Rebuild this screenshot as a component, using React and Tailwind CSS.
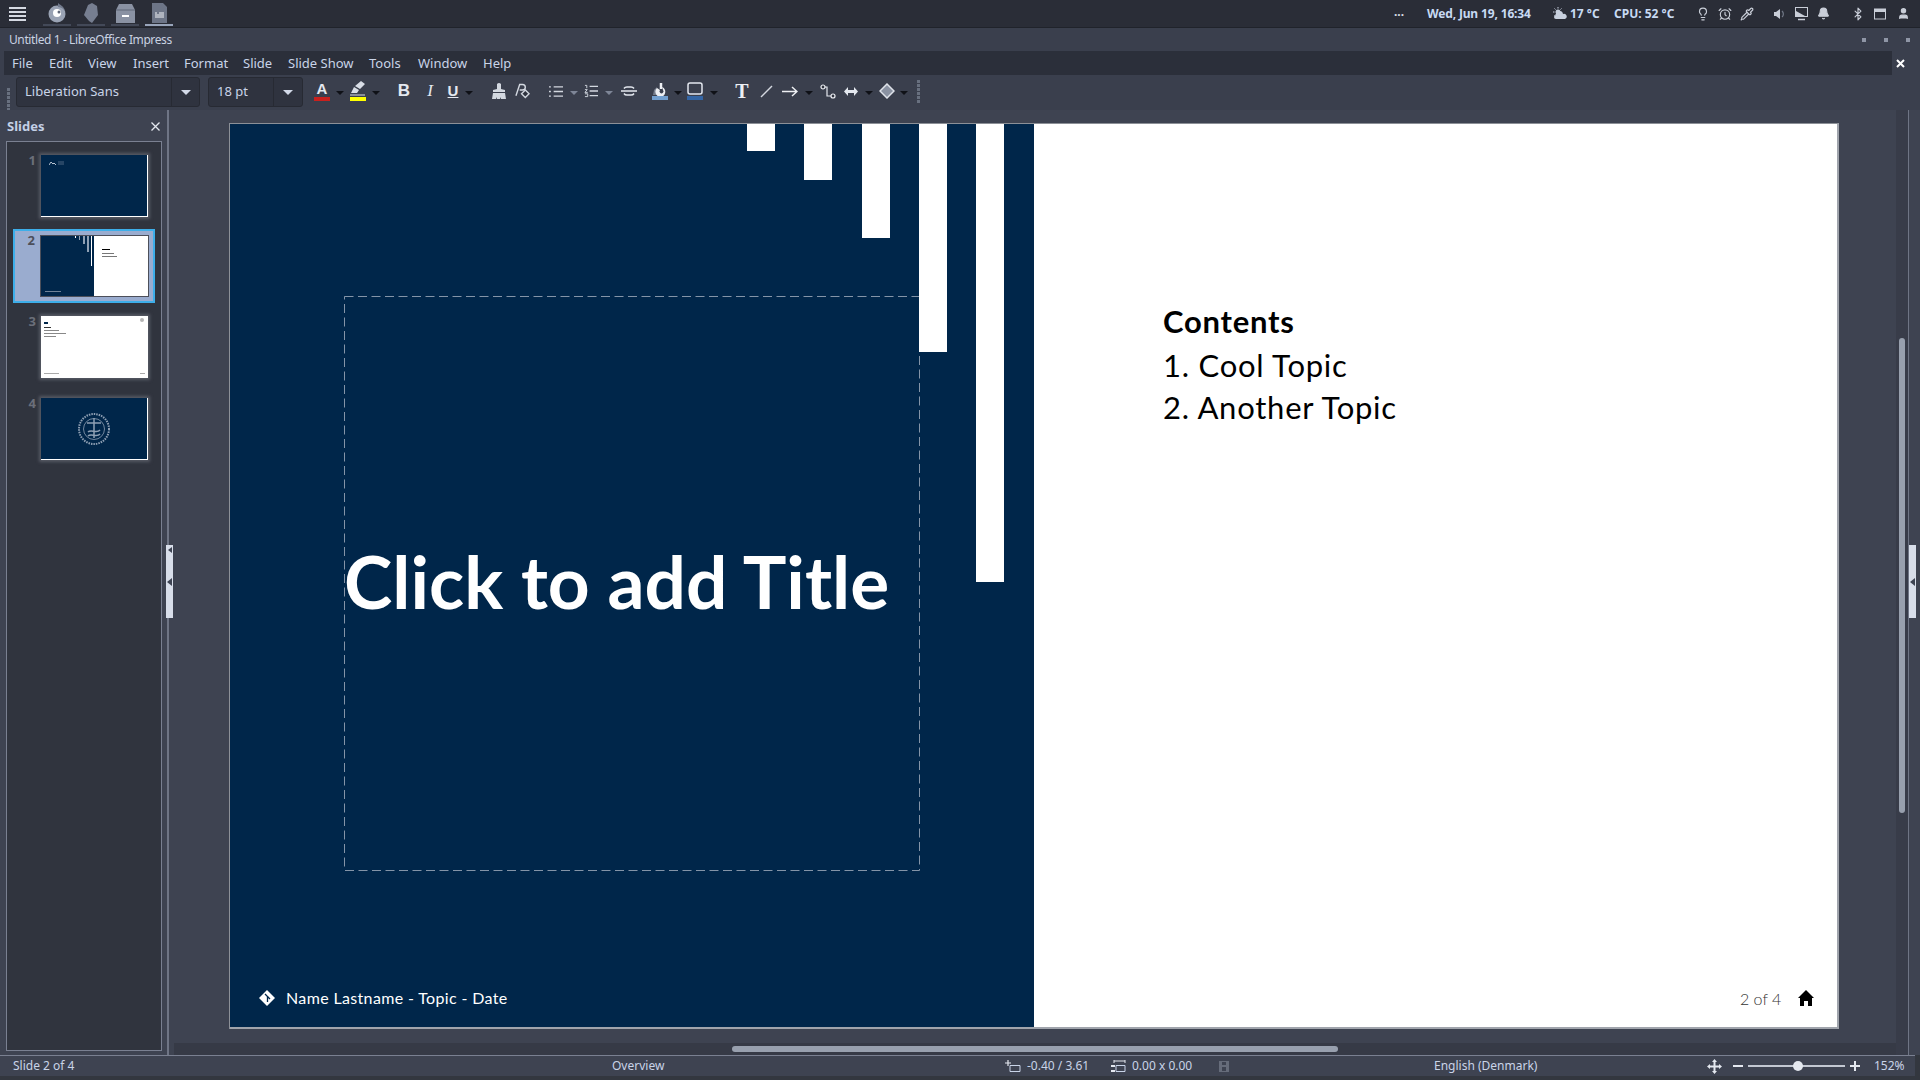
import { Bell, Bluetooth, Lightbulb, AlarmClock, Pipette, User } from 'lucide-react'

const menus = [
  ['File', 'w-[37px]'],
  ['Edit', 'w-[39px]'],
  ['View', 'w-[45px]'],
  ['Insert', 'w-[51px]'],
  ['Format', 'w-[59px]'],
  ['Slide', 'w-[45px]'],
  ['Slide Show', 'w-[81px]'],
  ['Tools', 'w-[49px]'],
  ['Window', 'w-[65px]'],
  ['Help', 'w-[40px]'],
]

function Caret({ className = 'ml-[5px]', color = 'border-t-[#0f1117]' }) {
  return <span className={`w-0 h-0 border-x-[4px] border-x-transparent border-t-[4px] shrink-0 mt-[3px] ${color} ${className}`} />
}

function Tool({ className = '', children }) {
  return <span className={`flex items-center justify-center h-[22px] shrink-0 ${className}`}>{children}</span>
}

function Combo({ width, inner, text }) {
  return (
    <div className={`flex h-[30px] rounded-[3px] border border-[#272a33] bg-[#2f333f] shrink-0 ${width}`}>
      <div className={`flex items-center pl-[8px] text-[13px] text-[#c9d4e8] ${inner}`}>{text}</div>
      <div className="flex-1 flex items-center justify-center border-l border-[#272a33]">
        <span className="w-0 h-0 border-x-[5px] border-x-transparent border-t-[5px] border-t-[#d3dae8]" />
      </div>
    </div>
  )
}

function TaskIcon({ active, children }) {
  return (
    <div className="w-[28px] h-[27px] mr-[6px] flex flex-col items-center justify-between shrink-0">
      <div className="h-[22px] mt-[2px] flex items-center justify-center">{children}</div>
      <div className={`w-[28px] h-[2px] mb-[1px] ${active ? 'bg-[#98a4ba]' : 'bg-[#434958]'}`} />
    </div>
  )
}

function TopPanel() {
  return (
    <div className="h-[28px] bg-[#2a2d37] border-b border-[#20232b] flex items-center text-[12px] font-bold text-[#c8daf3] shrink-0">
      <div className="w-[43px] pl-[9px] flex flex-col gap-[2px]">
        <div className="w-[17px] h-[2px] bg-[#d5d9e2]" />
        <div className="w-[17px] h-[2px] bg-[#d5d9e2]" />
        <div className="w-[17px] h-[2px] bg-[#d5d9e2]" />
        <div className="w-[17px] h-[2px] bg-[#d5d9e2]" />
      </div>
      <TaskIcon>
        <svg width="20" height="20" viewBox="0 0 20 20">
          <circle cx="10" cy="11" r="8.5" fill="#9aa3b4" />
          <path d="M11 0c2 2 6 3 7 8-2-3-5-4-7-4z" fill="#717a8c" />
          <circle cx="10" cy="10" r="4" fill="#fff" />
          <circle cx="12" cy="9" r="1.5" fill="#5f6778" />
        </svg>
      </TaskIcon>
      <TaskIcon>
        <svg width="14" height="20" viewBox="0 0 14 20">
          <path d="M8 0l5 3 1 9-6 8-3-2-5-6L4 2z" fill="#767e90" />
        </svg>
      </TaskIcon>
      <TaskIcon>
        <svg width="19" height="19" viewBox="0 0 19 19">
          <path d="M3 0h13l3 6v13H0V6z" fill="#8a92a3" />
          <path d="M0 6h19" stroke="#5f6676" />
          <rect x="6" y="11" width="7" height="2" fill="#fff" />
        </svg>
      </TaskIcon>
      <TaskIcon active>
        <svg width="15" height="20" viewBox="0 0 15 20">
          <path d="M0 0h11l4 4v16H0z" fill="#6d7587" />
          <path d="M3 10h2M7 10h5M3 12h9M3 14h9" stroke="#f2f4f7" strokeWidth="1" />
        </svg>
      </TaskIcon>
      <div className="flex-1" />
      <span className="w-[28px] mr-[14px] text-center text-[#d8dde6] -mt-[4px]">...</span>
      <span className="w-[126px] tracking-[-0.15px]">Wed, Jun 19, 16:34</span>
      <svg width="14" height="13" viewBox="0 0 14 13" className="mr-[1px]">
        <circle cx="5" cy="5" r="2.5" fill="#c8d0de" />
        <path d="M5 0v1.500M0 5h1.500M1.500 1.500l1 1M8.500 1.500l-1 1M1.500 8.500l1-1" stroke="#c8d0de" />
        <path d="M3 12a2 2 0 010-4 3.500 3.500 0 017-1 2.500 2.500 0 012 5z" fill="#c8d0de" />
      </svg>
      <span className="w-[44px] ml-[2px]">17 °C</span>
      <span className="w-[82px]">CPU: 52 °C</span>
      <Lightbulb size={14} strokeWidth={2} className="text-[#c9ced8] mr-[8px]" />
      <AlarmClock size={14} strokeWidth={2} className="text-[#c9ced8] mr-[8px]" />
      <Pipette size={14} strokeWidth={2} className="text-[#c9ced8] mr-[20px]" />
      <svg width="12" height="12" viewBox="0 0 12 12" className="mr-[9px]">
        <path d="M0 4h2l4-3v10L2 8H0z" fill="#c9ced8" />
        <path d="M8 3a4 4 0 010 6" stroke="#717887" fill="none" strokeWidth="1.200" />
      </svg>
      <svg width="13" height="14" viewBox="0 0 13 14" className="mr-[9px]">
        <rect x="0.500" y="0.500" width="12" height="9" fill="none" stroke="#c9ced8" />
        <path d="M1 4l9 5H1z" fill="#c9ced8" />
        <path d="M3 12.500h7" stroke="#c9ced8" strokeWidth="1.500" />
      </svg>
      <Bell size={13} fill="#c9ced8" className="text-[#c9ced8] mr-[21px]" />
      <Bluetooth size={14} strokeWidth={2} className="text-[#c9ced8] mr-[9px]" />
      <svg width="12" height="12" viewBox="0 0 12 12" className="mr-[11px]">
        <rect x="0.500" y="1" width="11" height="10" fill="none" stroke="#c9ced8" />
        <rect x="1" y="1" width="10" height="3" fill="#c9ced8" />
      </svg>
      <User size={13} fill="#c9ced8" className="text-[#c9ced8] mr-[10px]" />
    </div>
  )
}

function TitleBar() {
  return (
    <div className="h-[23px] flex items-center justify-between pl-[9px] pr-[10px] text-[12px] tracking-[-0.4px] text-[#c9d2e2] shrink-0">
      <span>Untitled 1 - LibreOffice Impress</span>
      <div className="flex gap-[18px]">
        <span className="w-[4px] h-[4px] bg-[#8f96a6]" />
        <span className="w-[4px] h-[4px] bg-[#8f96a6]" />
        <span className="w-[4px] h-[4px] bg-[#8f96a6]" />
      </div>
    </div>
  )
}

function MenuBar() {
  return (
    <div className="h-[24px] flex pl-[4px] shrink-0">
      <div className="w-[1888px] bg-[#2b2f3a] flex items-center pl-[8px] pt-[1px] text-[13px] text-[#c9d4e8]">
        {menus.map(([m, w]) => (
          <span key={m} className={w}>{m}</span>
        ))}
      </div>
      <div className="flex-1 flex items-center pl-[4px] text-white">
        <svg width="9" height="9" viewBox="0 0 9 9"><path d="M1 1l7 7M8 1l-7 7" stroke="#fff" strokeWidth="2" /></svg>
      </div>
    </div>
  )
}

function Grip({ className = '' }) {
  return (
    <div className={`flex flex-col gap-[1px] w-[3px] shrink-0 ${className}`}>
      {[0, 1, 2, 3, 4, 5].map((i) => (
        <span key={i} className="w-[3px] h-[3px] bg-[#68707f]" />
      ))}
    </div>
  )
}

function Toolbar() {
  return (
    <div className="h-[35px] flex items-start pt-[2px] pl-[7px] shrink-0">
      <Grip className="mt-[11px] mr-[6px]" />
      <Combo width="w-[184px] mr-[8px]" inner="w-[154px]" text="Liberation Sans" />
      <Combo width="w-[95px]" inner="w-[64px]" text="18 pt" />
      <div className="flex items-center h-[30px] -mt-[1px]">
        <Tool className="w-[16px] ml-[11px]">
          <svg width="16" height="22" viewBox="0 0 16 22">
            <text x="8" y="14" textAnchor="middle" fontSize="15" fontWeight="700" fontFamily="Liberation Sans" fill="#e4e8ef">A</text>
            <rect y="17" width="16" height="4" fill="#c9211e" />
          </svg>
        </Tool>
        <Caret className="ml-[6px]" />
        <Tool className="w-[16px] ml-[6px]">
          <svg width="16" height="22" viewBox="0 0 16 22">
            <path d="M1 13l3-6 5 3-2 3zM5 6l6-5 4 3-5 5z" fill="#d8dde6" />
            <path d="M0 15h15" stroke="#d8dde6" />
            <rect y="17" width="16" height="4" fill="#ffff00" />
          </svg>
        </Tool>
        <Caret className="ml-[6px]" />
        <Tool className="w-[14px] ml-[17px] text-[17px] font-bold text-[#e4e8ef] [font-family:'Liberation_Sans']">B</Tool>
        <Tool className="w-[10px] ml-[14px] text-[17px] italic text-[#e4e8ef] [font-family:'Liberation_Serif']">I</Tool>
        <Tool className="w-[14px] ml-[11px] text-[15px] font-bold underline text-[#e4e8ef] [font-family:'Liberation_Sans']">U</Tool>
        <Caret className="ml-[5px]" />
        <Tool className="w-[14px] ml-[19px]">
          <svg width="14" height="16" viewBox="0 0 14 16">
            <path d="M5 1q2-2 4 0v5l4 1v2H1V7l4-1z" fill="#d3d8e0" />
            <path d="M1 10h12l1 6H9v-2l-1 2H5v-2l-1 2H0z" fill="#d3d8e0" />
          </svg>
        </Tool>
        <Tool className="w-[15px] ml-[9px]">
          <svg width="16" height="16" viewBox="0 0 16 16">
            <path d="M1 13L5 1h3a3 3 0 010 6H5" fill="none" stroke="#d3d8e0" strokeWidth="1.500" />
            <path d="M11 7l4 4-4 4-4-4z" fill="#2f333f" stroke="#d3d8e0" strokeWidth="1.500" />
          </svg>
        </Tool>
        <Tool className="w-[14px] ml-[19px]">
          <svg width="15" height="13" viewBox="0 0 15 13">
            <path d="M0 1.500h2M5 1.500h10M0 6.500h2M5 6.500h10M0 11.500h2M5 11.500h10" stroke="#d3d8e0" strokeWidth="1.500" />
          </svg>
        </Tool>
        <Caret className="ml-[7px]" color="border-t-[#7e8697]" />
        <Tool className="w-[14px] ml-[6px]">
          <svg width="15" height="14" viewBox="0 0 15 14">
            <path d="M1 1h2v3M1 5.500h2.500L1 8.500h3M1 10h3v3H1" fill="none" stroke="#d3d8e0" />
            <path d="M6 2h9M6 7h9M6 12h9" stroke="#d3d8e0" strokeWidth="1.500" />
          </svg>
        </Tool>
        <Caret className="ml-[7px]" color="border-t-[#7e8697]" />
        <Tool className="w-[16px] ml-[8px]">
          <svg width="16" height="10" viewBox="0 0 16 10">
            <path d="M0 5h16" stroke="#e4e8ef" strokeWidth="1.500" />
            <path d="M3 2.500Q4 1 6 1h4q2 0 3 1.500M3 7.500Q4 9 6 9h4q2 0 3-1.500" fill="none" stroke="#e4e8ef" strokeWidth="1.500" />
          </svg>
        </Tool>
        <Tool className="w-[16px] ml-[15px]">
          <svg width="16" height="18" viewBox="0 0 16 18">
            <path d="M1 13l1-5 3-3v8z" fill="#767d8c" />
            <path d="M9 1v6" stroke="#eef0f4" strokeWidth="2.500" />
            <path d="M5 6a5 5 0 105-1l1 3a2 2 0 11-3 0z" fill="#eef0f4" />
            <rect y="14" width="16" height="4" fill="#729fcf" />
          </svg>
        </Tool>
        <Caret className="ml-[6px]" />
        <Tool className="w-[16px] ml-[5px]">
          <svg width="16" height="18" viewBox="0 0 16 18">
            <rect x="1" y="1" width="14" height="11" rx="2" fill="none" stroke="#e4e8ef" strokeWidth="1.500" />
            <rect y="14" width="16" height="4" fill="#3465a4" />
          </svg>
        </Tool>
        <Caret className="ml-[7px]" />
        <Tool className="w-[16px] ml-[16px] text-[20px] font-bold text-[#eef0f4] [font-family:'Liberation_Serif']">T</Tool>
        <Tool className="w-[13px] ml-[10px]">
          <svg width="13" height="13" viewBox="0 0 13 13"><path d="M1 12L12 1" stroke="#d3d8e0" strokeWidth="1.500" /></svg>
        </Tool>
        <Tool className="w-[16px] ml-[9px]">
          <svg width="16" height="11" viewBox="0 0 16 11"><path d="M0 5.500h15M10 1l5 4.500-5 4.500" fill="none" stroke="#eef0f4" strokeWidth="1.500" /></svg>
        </Tool>
        <Caret className="ml-[7px]" />
        <Tool className="w-[16px] ml-[7px]">
          <svg width="16" height="15" viewBox="0 0 16 15">
            <path d="M3 3h4v9h6" fill="none" stroke="#e4e8ef" strokeWidth="1.200" />
            <circle cx="3" cy="3" r="2" fill="#2f333f" stroke="#eef0f4" strokeWidth="1.200" />
            <circle cx="13" cy="12" r="2" fill="#2f333f" stroke="#eef0f4" strokeWidth="1.200" />
          </svg>
        </Tool>
        <Tool className="w-[14px] ml-[8px]">
          <svg width="14" height="9" viewBox="0 0 14 9"><path d="M0 4.500L4 0v3h6V0l4 4.500L10 9V6H4v3z" fill="#e4e8ef" /></svg>
        </Tool>
        <Caret className="ml-[7px]" />
        <Tool className="w-[16px] ml-[6px]">
          <svg width="16" height="16" viewBox="0 0 16 16"><path d="M8 1l7 7-7 7-7-7z" fill="#8a92a2" stroke="#dfe3ea" strokeWidth="1.500" /></svg>
        </Tool>
        <Caret className="ml-[5px]" />
        <Grip className="ml-[9px]" />
      </div>
    </div>
  )
}

function Thumb({ n, sel, children, className = 'bg-[#00264a]' }) {
  return (
    <div className={`flex w-[142px] ml-[13px] ${sel ? 'h-[74px] items-center border-2 border-[#3daee9] bg-[#9aaccf]' : 'h-[62px] items-start'}`}>
      <span className={`text-right text-[13px] font-bold leading-[14px] pr-[2px] ${sel ? 'w-[22px] text-[#4c4f5a] self-start mt-[2px]' : 'w-[25px] text-[#6b6f7a] -mt-[2px]'}`}>{n}</span>
      <div className={`relative ml-[3px] h-[62px] overflow-hidden ${sel ? 'w-[109px] border border-[#4c4f5a]' : 'w-[107px] shadow-[0_0_3px_2px_#565a64] border-r border-b border-white'} ${className}`}>
        {children}
      </div>
    </div>
  )
}

function SlidePanel() {
  return (
    <div className="w-[174px] shrink-0 flex">
      <div className="w-[162px] flex flex-col shrink-0">
        <div className="h-[31px] flex items-center justify-between pl-[7px] pr-[1px] pt-[2px] text-[13px] font-bold text-[#c3d0e6]">
          <span>Slides</span>
          <svg width="9" height="9" viewBox="0 0 9 9" className="mr-[1px]"><path d="M0.500 0.500l8 8M8.500 0.500l-8 8" stroke="#e4e8ef" strokeWidth="1.300" /></svg>
        </div>
        <div className="ml-[6px] w-[156px] h-[910px] border border-[#7a8091] bg-[#30343e] flex flex-col pt-[13px]">
          <div className="-ml-[7px]">
            <Thumb n="1">
              <svg width="16" height="5" viewBox="0 0 16 5" className="absolute left-[8px] top-[6px]">
                <path d="M0 4l2-3 2 2 1-1 2 2" fill="none" stroke="#b7c2d0" />
                <path d="M9 1h6M9 3h6" stroke="#4c6480" />
              </svg>
            </Thumb>
          </div>
          <div className="-ml-[7px] mt-[12px]">
            <Thumb n="2" sel className="bg-[#00264a]">
              <div className="h-full flex">
                <div className="w-[53px] bg-[#00264a] relative">
                  <div className="absolute left-[34px] top-0 w-[1px] h-[2px] bg-white" />
                  <div className="absolute left-[38px] top-0 w-[1px] h-[4px] bg-[#8fa0b4]" />
                  <div className="absolute left-[42px] top-0 w-[2px] h-[8px] bg-[#8fa0b4]" />
                  <div className="absolute left-[46px] top-0 w-[2px] h-[16px] bg-[#8fa0b4]" />
                  <div className="absolute left-[50px] top-0 w-[1px] h-[30px] bg-white" />
                  <div className="absolute left-[4px] bottom-[4px] w-[16px] h-[1px] bg-[#6e8298]" />
                </div>
                <div className="flex-1 bg-white pl-[8px] pt-[13px]">
                  <div className="w-[8px] h-[1px] bg-black mb-[3px]" />
                  <div className="w-[12px] h-[1px] bg-[#777] mb-[2px]" />
                  <div className="w-[15px] h-[1px] bg-[#777]" />
                </div>
              </div>
            </Thumb>
          </div>
          <div className="-ml-[7px] mt-[13px]">
            <Thumb n="3" className="bg-white">
              <div className="pl-[3px] pt-[6px]">
                <div className="w-[4px] h-[2px] bg-[#00264a] mb-[3px]" />
                <div className="w-[7px] h-[1px] bg-[#333] mb-[2px]" />
                <div className="w-[15px] h-[1px] bg-[#888] mb-[2px]" />
                <div className="w-[22px] h-[1px] bg-[#888] mb-[2px]" />
                <div className="w-[12px] h-[1px] bg-[#888]" />
              </div>
              <div className="absolute right-[3px] top-[2px] w-[4px] h-[4px] rounded-full bg-[#b5b5b5]" />
              <div className="absolute left-[3px] bottom-[3px] w-[15px] h-[1px] bg-[#aaa]" />
              <div className="absolute right-[2px] bottom-[3px] w-[5px] h-[1px] bg-[#aaa]" />
            </Thumb>
          </div>
          <div className="-ml-[7px] mt-[20px]">
            <Thumb n="4">
              <div className="h-full flex items-center justify-center">
                <svg width="32" height="32" viewBox="0 0 32 32" fill="none" stroke="#8fa0b4">
                  <circle cx="16" cy="16" r="15" strokeDasharray="1.500 1" strokeWidth="2" />
                  <circle cx="16" cy="16" r="10.500" strokeWidth="0.800" />
                  <path d="M16 5v20M9 10h14M10 19c3-3 9 2 12-2M10 23c3-3 9 2 12-2" strokeWidth="1.500" />
                </svg>
              </div>
            </Thumb>
          </div>
        </div>
      </div>
      <div className="ml-[5px] w-[2px] bg-[#6f7585] relative">
        <div className="absolute left-[-1px] top-[435px] w-[7px] h-[73px] bg-[#d8deea] flex items-center justify-center">
          <span className="absolute top-[2px] left-[2px] w-0 h-0 border-y-[3px] border-y-transparent border-r-[4px] border-r-[#3d4352]" />
          <span className="w-0 h-0 border-y-[4px] border-y-transparent border-r-[5px] border-r-[#3d4352]" />
        </div>
      </div>
    </div>
  )
}

function Slide() {
  return (
    <div className="relative w-[1609px] h-[906px] flex border-r-2 border-b-2 border-[#a0a4ac] border-t border-t-[#8c9097] shadow-[-1px_0_0_#8c9097] font-['Lato',sans-serif]">
      <div className="w-[804px] bg-[#00264a]" />
      <div className="flex-1 bg-white" />
      {/* slide canvas, the shapes sit where the deck put them */}
      <svg width="576" height="575" className="absolute left-[114px] top-[172px]">
        <rect x="0.500" y="0.500" width="575" height="574" fill="none" stroke="#8494a8" strokeDasharray="9 4.500" />
      </svg>
      <div className="absolute left-[517px] top-0 w-[28px] h-[27px] bg-white" />
      <div className="absolute left-[574px] top-0 w-[28px] h-[56px] bg-white" />
      <div className="absolute left-[632px] top-0 w-[28px] h-[114px] bg-white" />
      <div className="absolute left-[689px] top-0 w-[28px] h-[228px] bg-white" />
      <div className="absolute left-[746px] top-0 w-[28px] h-[458px] bg-white" />
      <span className="absolute left-[114px] top-[421px] text-[73px] font-bold text-white whitespace-nowrap leading-none">Click to add Title</span>
      <svg width="16" height="16" viewBox="0 0 16 16" className="absolute left-[29px] top-[866px]">
        <path d="M8 0l8 8-8 8-8-8z" fill="#fff" />
        <path d="M6 4l2.500 2.500V12M8.500 6.500L11 9" stroke="#00264a" strokeWidth="1.300" fill="none" />
      </svg>
      <span className="absolute left-[56px] top-[864px] text-[16px] tracking-[0.35px] text-white whitespace-nowrap leading-[20px]">Name Lastname - Topic - Date</span>
      <span className="absolute left-[1510px] top-[865px] text-[16px] font-light text-[#333] leading-[20px]">2 of 4</span>
      <svg width="16" height="16" viewBox="0 0 16 16" className="absolute left-[1568px] top-[866px]">
        <path d="M8 0L0 8h2v8h4v-5h4v5h4V8h2z" fill="#000" />
      </svg>
      <div className="absolute left-[933px] top-[176px] leading-[42px] text-[31px] tracking-[0.75px] text-black whitespace-nowrap">
        <div className="font-bold mb-[2px]">Contents</div>
        <div>1. Cool Topic</div>
        <div>2. Another Topic</div>
      </div>
    </div>
  )
}

function Canvas() {
  return (
    <div className="flex-1 flex min-w-0">
      <div className="flex-1 flex flex-col min-w-0">
        <div className="flex-1 pl-[56px] pt-[13px] bg-[#3e4351]">
          <Slide />
        </div>
        <div className="h-[12px] bg-[#363a46] pl-[558px] flex items-center">
          <div className="w-[606px] h-[6px] rounded-full bg-[#98a0ae]" />
        </div>
      </div>
      <div className="w-[12px] bg-[#383c49] border-r border-r-transparent flex flex-col">
        <div className="w-[6px] ml-[3px] mt-[228px] h-[475px] rounded-full bg-[#98a0ae]" />
      </div>
      <div className="w-[12px] border-l border-[#6f7585] relative">
        <div className="absolute left-0 top-[435px] w-[7px] h-[73px] bg-[#d8deea] flex items-center justify-center">
          <span className="w-0 h-0 border-y-[4px] border-y-transparent border-r-[5px] border-r-[#3d4352]" />
        </div>
      </div>
    </div>
  )
}

function StatusBar() {
  return (
    <div className="h-[25px] shrink-0 bg-[#33373f]">
      <div className="h-[21px] w-[1915px] border-t border-[#7a8091] bg-[#3e4351] flex items-center text-[12px] text-[#c9d4e8] whitespace-nowrap">
        <span className="w-[612px] pl-[13px]">Slide 2 of 4</span>
        <span className="w-[393px]">Overview</span>
        <svg width="16" height="13" viewBox="0 0 16 13" className="mr-[6px]">
          <path d="M5 5.500h10v6H5z" fill="none" stroke="#c9d4e8" />
          <path d="M0 3h6M3 0v6" stroke="#e4e8ef" strokeWidth="1.200" />
        </svg>
        <span className="w-[84px]">-0.40 / 3.61</span>
        <svg width="15" height="13" viewBox="0 0 15 13" className="mr-[6px]">
          <path d="M3 1h11M3 0v3M14 0v3" stroke="#e4e8ef" />
          <path d="M5 5.500h9v6H5z" fill="none" stroke="#c9d4e8" />
          <path d="M0 5h4v2H0zM0 10h4v2H0z" fill="#e4e8ef" />
        </svg>
        <span className="w-[87px]">0.00 x 0.00</span>
        <svg width="10" height="13" viewBox="0 0 10 13" className="mr-[205px]">
          <path d="M0 1h10v11H0z" fill="#666c7a" />
          <path d="M3 2h4v3H3zM3 7h4v4H3z" fill="#3e4351" />
        </svg>
        <span className="w-[273px]">English (Denmark)</span>
        <svg width="15" height="15" viewBox="0 0 15 15" className="mr-[11px]">
          <path d="M7.500 0L10 3H8.500v3.500H12V5l3 2.500L12 10V8.500H8.500V12H10l-2.500 3L5 12h1.500V8.500H3V10L0 7.500 3 5v1.500h3.500V3H5z" fill="#e4e8ef" />
        </svg>
        <span className="w-[10px] h-[2px] bg-[#e4e8ef] mr-[5px]" />
        <div className="w-[97px] h-[2px] bg-[#c3c8d2] relative mr-[5px]">
          <span className="absolute left-[45px] -top-[4px] w-[10px] h-[10px] rounded-full bg-[#e4e8ef]" />
        </div>
        <span className="w-[10px] h-[10px] mr-[14px] flex items-center justify-center">
          <svg width="10" height="10" viewBox="0 0 10 10"><path d="M5 0v10M0 5h10" stroke="#e4e8ef" strokeWidth="2" /></svg>
        </span>
        <span>152%</span>
      </div>
    </div>
  )
}

export default function App() {
  return (
    <div className="w-[1920px] h-[1080px] overflow-hidden flex flex-col bg-[#3a3f4d] font-['Noto_Sans',sans-serif]">
      <TopPanel />
      <TitleBar />
      <MenuBar />
      <Toolbar />
      <div className="flex-1 flex min-h-0 bg-[#3e4351]">
        <SlidePanel />
        <Canvas />
      </div>
      <StatusBar />
    </div>
  )
}
